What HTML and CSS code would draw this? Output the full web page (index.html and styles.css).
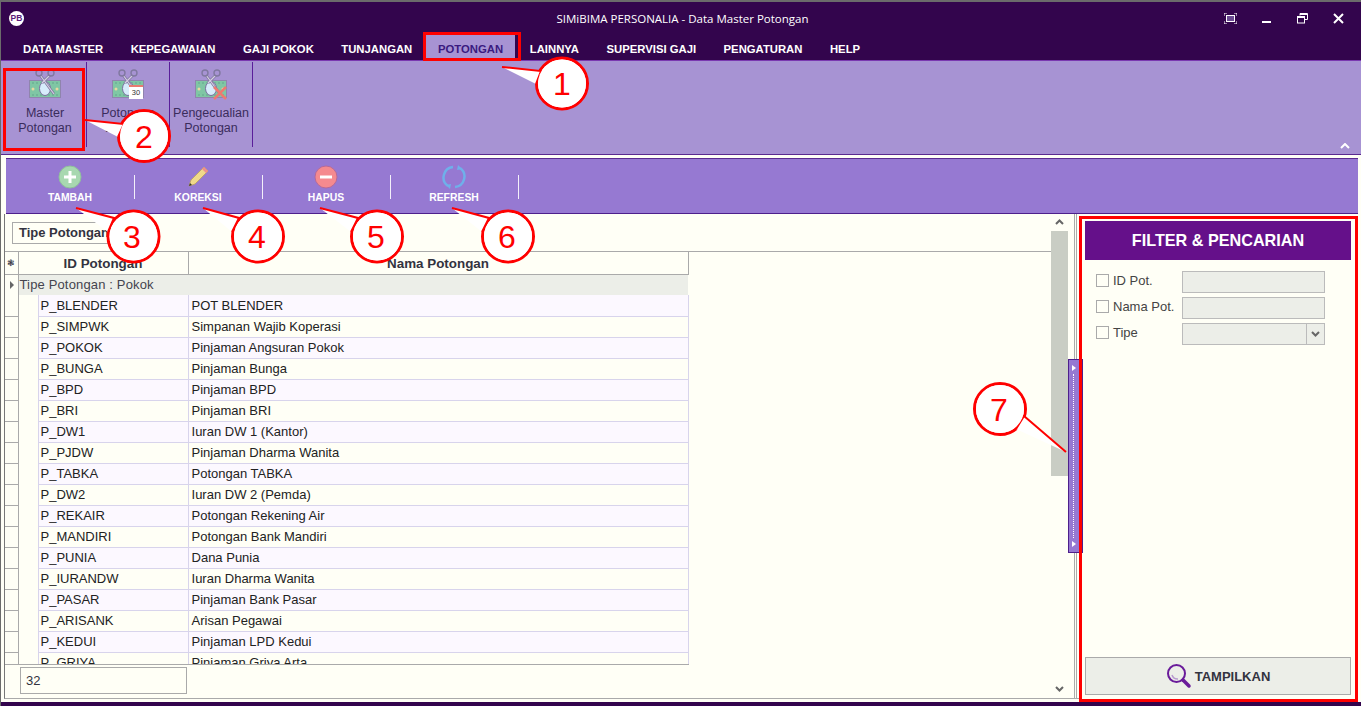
FILE: index.html
```html
<!DOCTYPE html>
<html lang="id">
<head>
<meta charset="utf-8">
<title>SIMiBIMA PERSONALIA - Data Master Potongan</title>
<link rel="stylesheet" href="styles.css">
</head>
<body>
<svg class="defs" width="0" height="0" aria-hidden="true">
  <symbol id="money" viewBox="0 0 32 32">
    <rect x=".5" y="11.500" width="31" height="17" fill="#7fc6a4" stroke="#8f84ad" stroke-width="1"/>
    <path d="M3 14h26M3 26h26" fill="none" stroke="#5d9f88" stroke-dasharray="2 2" stroke-width=".8"/>
    <ellipse cx="16" cy="19.500" rx="5.500" ry="7" fill="#d7ecfb" stroke="#7a6f9e" stroke-width="1"/>
    <circle cx="4" cy="20" r="1.500" fill="#e8d9a0"/>
    <circle cx="28" cy="20" r="1.500" fill="#e8d9a0"/>
    <path d="M11 6L25 25M21 6L13 14" stroke="#8078a0" stroke-width="2.600" fill="none"/>
    <path d="M11 6L25 25M21 6L13 14" stroke="#d5d0e2" stroke-width="1.200" fill="none"/>
    <circle cx="10" cy="4" r="3" fill="none" stroke="#8078a0" stroke-width="1.400"/>
    <circle cx="22" cy="4" r="3" fill="none" stroke="#8078a0" stroke-width="1.400"/>
  </symbol>
</svg>
<div class="window">
  <header class="titlebar">
    <span class="logo"><span>PB</span></span>
    <span class="title">SIMiBIMA PERSONALIA - Data Master Potongan</span>
    <div class="winbtns">
      <svg width="13" height="11" viewBox="0 0 13 11"><path d="M0 3V0h3M10 0h3v3M13 8v3h-3M3 11H0V8" fill="none" stroke="#fff"/><rect x="2.500" y="2.500" width="8" height="6" fill="#6a4a90" stroke="#fff"/></svg>
      <svg width="10" height="11" viewBox="0 0 10 11"><rect x="0" y="8" width="9" height="2" fill="#fff"/></svg>
      <svg width="11" height="11" viewBox="0 0 11 11"><path d="M3 2.500V.5h7.500v6H8" fill="none" stroke="#fff"/><rect x=".5" y="3.500" width="7" height="6.500" fill="none" stroke="#fff"/><path d="M3 1.500h7.500M1 4.500h6" stroke="#fff"/></svg>
      <svg width="11" height="11" viewBox="0 0 11 11"><path d="M1 1l9 9M10 1l-9 9" stroke="#fff" stroke-width="2"/></svg>
    </div>
  </header>
  <nav class="menubar">
    <a class="menu">DATA MASTER</a>
    <a class="menu">KEPEGAWAIAN</a>
    <a class="menu">GAJI POKOK</a>
    <a class="menu">TUNJANGAN</a>
    <a class="menu active">POTONGAN</a>
    <a class="menu">LAINNYA</a>
    <a class="menu">SUPERVISI GAJI</a>
    <a class="menu">PENGATURAN</a>
    <a class="menu">HELP</a>
  </nav>
  <section class="ribbon">
    <div class="rib-btn">
      <svg class="rib-ico" width="32" height="32"><use href="#money"/></svg>
      <span>Master<br>Potongan</span>
    </div>
    <div class="rib-btn">
      <span class="rib-ico-wrap">
        <svg class="rib-ico" width="32" height="32"><use href="#money"/></svg>
        <span class="cal">30</span>
      </span>
      <span>Potongan<br>Bulanan</span>
    </div>
    <div class="rib-btn">
      <span class="rib-ico-wrap">
        <svg class="rib-ico" width="32" height="32"><use href="#money"/></svg>
        <svg class="xmark" width="14" height="14" viewBox="0 0 14 14"><path d="M1 1l12 12M13 1L1 13" stroke="#ee7a70" stroke-width="2.500"/></svg>
      </span>
      <span>Pengecualian<br>Potongan</span>
    </div>
    <svg class="collapse" width="10" height="6" viewBox="0 0 10 6"><path d="M1 5l4-4 4 4" fill="none" stroke="#fff" stroke-width="2"/></svg>
  </section>
  <main class="content">
    <div class="toolbar">
      <div class="tool">
        <svg width="24" height="24" viewBox="0 0 24 24"><circle cx="12" cy="12" r="11" fill="#a8d8b0" stroke="#8fc09c"/><path d="M12 6v12M6 12h12" stroke="#fff" stroke-width="3"/></svg>
        <span>TAMBAH</span>
      </div>
      <i class="sep"></i>
      <div class="tool">
        <svg width="24" height="24" viewBox="0 0 24 24"><path d="M3 21l2-6L18 2l4 4L9 19z" fill="#f0d98a" stroke="#b9a15e" stroke-width=".8"/><path d="M18 2l4 4-2 2-4-4z" fill="#ee8f8f"/><path d="M3 21l1-3 2 2z" fill="#333"/></svg>
        <span>KOREKSI</span>
      </div>
      <i class="sep"></i>
      <div class="tool">
        <svg width="24" height="24" viewBox="0 0 24 24"><circle cx="12" cy="12" r="11" fill="#f58a8f" stroke="#b56a9a"/><path d="M6 12h12" stroke="#fff" stroke-width="3"/></svg>
        <span>HAPUS</span>
      </div>
      <i class="sep"></i>
      <div class="tool">
        <svg width="24" height="24" viewBox="0 0 24 24"><path d="M6 21A10.500 10.500 0 0 1 11 2" fill="none" stroke="#6fb0ea" stroke-width="2.500"/><path d="M18 3a10.500 10.500 0 0 1-5 19" fill="none" stroke="#6fb0ea" stroke-width="2.500"/><path d="M16 0l4 4-5 1zM8 24l-4-4 5-1z" fill="#6fb0ea"/></svg>
        <span>REFRESH</span>
      </div>
      <i class="sep"></i>
    </div>
    <div class="workspace">
      <div class="pane">
        <div class="groupbar"><span class="groupchip">Tipe Potongan</span></div>
        <div class="gridwrap">
          <table class="grid">
            <colgroup><col class="c-mark"><col class="c-ind"><col class="c-id"><col class="c-nama"></colgroup>
            <thead>
              <tr><th class="star">&#10051;</th><th class="hid" colspan="2">ID Potongan</th><th>Nama Potongan</th></tr>
            </thead>
            <tbody>
              <tr class="group"><td class="mark"><b class="tri"></b></td><td colspan="3">Tipe Potongan : Pokok</td></tr>
              <tr><td class="mark"></td><td class="ind"></td><td>P_BLENDER</td><td>POT BLENDER</td></tr>
              <tr><td class="mark"></td><td class="ind"></td><td>P_SIMPWK</td><td>Simpanan Wajib Koperasi</td></tr>
              <tr><td class="mark"></td><td class="ind"></td><td>P_POKOK</td><td>Pinjaman Angsuran Pokok</td></tr>
              <tr><td class="mark"></td><td class="ind"></td><td>P_BUNGA</td><td>Pinjaman Bunga</td></tr>
              <tr><td class="mark"></td><td class="ind"></td><td>P_BPD</td><td>Pinjaman BPD</td></tr>
              <tr><td class="mark"></td><td class="ind"></td><td>P_BRI</td><td>Pinjaman BRI</td></tr>
              <tr><td class="mark"></td><td class="ind"></td><td>P_DW1</td><td>Iuran DW 1 (Kantor)</td></tr>
              <tr><td class="mark"></td><td class="ind"></td><td>P_PJDW</td><td>Pinjaman Dharma Wanita</td></tr>
              <tr><td class="mark"></td><td class="ind"></td><td>P_TABKA</td><td>Potongan TABKA</td></tr>
              <tr><td class="mark"></td><td class="ind"></td><td>P_DW2</td><td>Iuran DW 2 (Pemda)</td></tr>
              <tr><td class="mark"></td><td class="ind"></td><td>P_REKAIR</td><td>Potongan Rekening Air</td></tr>
              <tr><td class="mark"></td><td class="ind"></td><td>P_MANDIRI</td><td>Potongan Bank Mandiri</td></tr>
              <tr><td class="mark"></td><td class="ind"></td><td>P_PUNIA</td><td>Dana Punia</td></tr>
              <tr><td class="mark"></td><td class="ind"></td><td>P_IURANDW</td><td>Iuran Dharma Wanita</td></tr>
              <tr><td class="mark"></td><td class="ind"></td><td>P_PASAR</td><td>Pinjaman Bank Pasar</td></tr>
              <tr><td class="mark"></td><td class="ind"></td><td>P_ARISANK</td><td>Arisan Pegawai</td></tr>
              <tr><td class="mark"></td><td class="ind"></td><td>P_KEDUI</td><td>Pinjaman LPD Kedui</td></tr>
              <tr><td class="mark"></td><td class="ind"></td><td>P_GRIYA</td><td>Pinjaman Griya Arta</td></tr>
            </tbody>
          </table>
        </div>
        <div class="gridfoot"><span class="count">32</span></div>
      </div>
      <div class="scroll">
        <svg width="9" height="6" viewBox="0 0 9 6"><path d="M1 5l3.500-3.500L8 5" fill="none" stroke="#666" stroke-width="2"/></svg>
        <div class="thumb"></div>
        <svg class="down" width="9" height="6" viewBox="0 0 9 6"><path d="M1 1l3.500 3.500L8 1" fill="none" stroke="#666" stroke-width="2"/></svg>
      </div>
      <div class="splitter"><div class="handle"><b></b><i></i><b></b></div></div>
      <aside class="filter">
        <h2 class="filter-head">FILTER &amp; PENCARIAN</h2>
        <div class="form">
          <label class="frow"><span class="chk"></span><span class="lbl">ID Pot.</span><span class="inp"></span></label>
          <label class="frow"><span class="chk"></span><span class="lbl">Nama Pot.</span><span class="inp"></span></label>
          <label class="frow"><span class="chk"></span><span class="lbl">Tipe</span><span class="inp select"><span class="drop"><svg width="9" height="6" viewBox="0 0 9 6"><path d="M1 1l3.500 3.500L8 1" fill="none" stroke="#666" stroke-width="2"/></svg></span></span></label>
        </div>
        <button class="show">
          <svg width="26" height="26" viewBox="0 0 26 26"><circle cx="10.500" cy="10.500" r="8.500" fill="none" stroke="#6a1b9a" stroke-width="2"/><path d="M6 12a6 6 0 0 0 6 4" fill="none" stroke="#b89ad0" stroke-width="1.500"/><path d="M17 17l6 6" stroke="#6a1b9a" stroke-width="3.500" stroke-linecap="round"/></svg>
          <span>TAMPILKAN</span>
        </button>
      </aside>
    </div>
  </main>
  <svg class="notes" width="1361" height="706" viewBox="0 0 1361 706">
    <g class="box"><rect x="424.500" y="33.500" width="95" height="26"/><rect x="4.500" y="69.500" width="79" height="80"/><rect x="1080.500" y="217.500" width="276" height="483"/></g>
    <g class="call">
      <g><circle cx="562" cy="83.500" r="25.500"/><path d="M502 67L541 71L536 84"/><circle class="in" cx="562" cy="83.500" r="24"/><text x="562" y="95">1</text></g>
      <g><circle cx="144" cy="136" r="25.500"/><path d="M85 120L124 124L118 137"/><circle class="in" cx="144" cy="136" r="24"/><text x="144" y="147.500">2</text></g>
      <g><circle cx="133.500" cy="236.500" r="25.500"/><path d="M76 208L114 218L108 232"/><circle class="in" cx="133.500" cy="236.500" r="24"/><text x="132" y="248">3</text></g>
      <g><circle cx="258" cy="236.500" r="25.500"/><path d="M203 208L239 218L232 232"/><circle class="in" cx="258" cy="236.500" r="24"/><text x="257" y="248">4</text></g>
      <g><circle cx="377" cy="236.500" r="25.500"/><path d="M320 208L358 218L351 232"/><circle class="in" cx="377" cy="236.500" r="24"/><text x="376" y="248">5</text></g>
      <g><circle cx="508" cy="236.500" r="25.500"/><path d="M452 208L489 218L482 232"/><circle class="in" cx="508" cy="236.500" r="24"/><text x="507" y="248">6</text></g>
      <g><circle cx="1000" cy="409" r="25.500"/><path d="M1066 452L1024 416L1016 429"/><circle class="in" cx="1000" cy="409" r="24"/><text x="999" y="420.500">7</text></g>
    </g>
  </svg>
</div>
</body>
</html>
```

FILE: styles.css
```css
* { box-sizing: border-box; }
html, body { margin: 0; padding: 0; }
body { font-family: "Liberation Sans", Arial, sans-serif; overflow: hidden; background: #33054d; }
.defs { position: absolute; }

.window {
  position: relative;
  width: 1361px;
  height: 706px;
  display: flex;
  flex-direction: column;
  background: #33054d;
  border-top: 2px solid #6b6b6b;
  border-left: 1px solid #6b6b6b;
  overflow: hidden;
}

.titlebar {
  height: 30px;
  flex: none;
  display: flex;
  align-items: center;
  color: #fff;
  padding: 2px 0 0 8px;
}
.logo {
  width: 15px; height: 15px; border-radius: 50%;
  background: #fff; color: #5a1a7a;
  display: flex; align-items: center; justify-content: center;
  font-size: 8.500px; font-weight: bold; flex: none;
}
.title {
  flex: 1;
  text-align: center;
  font-family: "Open Sans", "Liberation Sans", sans-serif;
  font-size: 11.500px;
  margin-left: 127px;
}
.winbtns { display: flex; align-items: center; gap: 25px; padding-right: 17px; margin-left: 10px; }

.menubar {
  height: 29px;
  flex: none;
  display: flex;
  align-items: flex-end;
  padding-left: 8.250px;
  border-bottom: 1px solid #7a38b0;
}
.menu {
  height: 25px;
  line-height: 29px;
  padding: 0 13.750px;
  font-size: 11.300px;
  font-weight: bold;
  color: #fff;
  white-space: nowrap;
}
.menu.active { background: #a793d3; color: #3a1a80; padding: 0 12px; margin: 0 1px 0 0; }

.ribbon {
  position: relative;
  height: 94px;
  flex: none;
  display: flex;
  background: #a793d3;
  padding: 1px 0 7px 3px;
  border-bottom: 1px solid #5a2a90;
}
.rib-btn {
  width: 83px;
  display: flex;
  flex-direction: column;
  align-items: center;
  border-right: 1px solid #5a1e9a;
  color: #3a2c5c;
  font-size: 12.500px;
  line-height: 15px;
  text-align: center;
  padding-top: 7px;
}
.rib-btn > span:last-child { margin-top: 5px; }
.rib-ico { display: block; }
.rib-ico-wrap { position: relative; display: block; width: 32px; height: 32px; }
.cal {
  position: absolute; left: 17px; top: 16px;
  width: 14px; height: 14px;
  background: #fff; border-top: 2px solid #e87a70;
  font-size: 7.500px; line-height: 12px; color: #333; text-align: center;
}
.xmark { position: absolute; left: 18px; top: 17px; }
.collapse { position: absolute; right: 11px; bottom: 5px; }

.content {
  flex: 1;
  min-height: 0;
  display: flex;
  flex-direction: column;
  background: #fffff6;
  padding: 3px 3px 3px 3px;
  border-bottom: 4px solid #33054d;
}
.toolbar {
  height: 56px;
  flex: none;
  display: flex;
  align-items: center;
  background: #9679d2;
  border-top: 1px solid #5a2a90;
  border-bottom: 1px solid #4d1f8c;
  margin-left: 2px;
  padding-left: 1px;
}
.tool {
  width: 126px;
  margin-right: 1px;
  height: 100%;
  display: flex;
  flex-direction: column;
  align-items: center;
  padding-top: 6px;
  color: #fff;
  font-size: 10.400px;
  font-weight: bold;
}
.tool span { margin-top: 3px; }
.sep { width: 1px; height: 24px; background: #f4f0fa; margin-top: 1px; }

.workspace {
  flex: 1;
  min-height: 0;
  display: flex;
  border-left: 1px solid #777;
  border-bottom: 1px solid #aaa;
}
.pane {
  width: 1046px;
  flex: none;
  display: flex;
  flex-direction: column;
  color: #33333f;
  font-size: 13px;
}
.groupbar { height: 37px; flex: none; padding: 8px 0 0 7px; }
.groupchip {
  display: block;
  width: 100px;
  height: 22px;
  line-height: 20px;
  border: 1px solid #aaa;
  padding-left: 6px;
  font-weight: bold;
  font-size: 13px;
  white-space: nowrap;
  overflow: hidden;
}
.gridwrap { height: 413px; flex: none; overflow: hidden; border-top: 1px solid #aaa; }
.grid { width: 683px; table-layout: fixed; border-collapse: collapse; }
.c-mark { width: 13px; } .c-ind { width: 20px; } .c-id { width: 150px; } .c-nama { width: 500px; }
.grid th {
  height: 22px; padding: 1px 0 0;
  font-size: 13.400px; font-weight: bold; color: #33333f;
  border-bottom: 1px solid #aaa; border-right: 1px solid #aaa;
  text-align: center;
}
.grid th.star { font-size: 9px; font-weight: normal; }
.grid td {
  height: 21px; padding: 0 0 0 2px;
  border-bottom: 1px solid #d8d4ec;
  border-right: 1px solid #d8d4ec;
  color: #222;
  white-space: nowrap;
  overflow: hidden;
  background: #fffff6;
}
.grid td:last-child { padding-left: 3px; }
.grid tbody tr:nth-child(even) td { background: #fcf8ff; }
.grid tbody tr td.mark { background: #fffff6; border-color: #aaa; border-left: 0; padding: 0; }
.grid tbody tr td.ind { background: #fffff6; border-bottom: 0; border-right-color: #d8d4ec; padding: 0; }
.grid tr.group td { background: #eceee8; color: #44444f; border: 0; letter-spacing: .15px; padding-left: 1px; }
.grid tr.group td.mark { background: #fffff6; border-right: 1px solid #aaa; }
.tri {
  display: block; width: 0; height: 0; margin-left: 5px;
  border-left: 4px solid #666; border-top: 4px solid transparent; border-bottom: 4px solid transparent;
}
.gridfoot {
  flex: 1; padding: 3px 0 0 15px;
  background: linear-gradient(#aaa, #aaa) no-repeat 0 0 / 684px 1px;
}
.count {
  display: block; width: 167px; height: 27px; line-height: 25px;
  border: 1px solid #aaa; padding-left: 5px; color: #33333f;
}

.scroll {
  width: 17px; flex: none;
  display: flex; flex-direction: column; align-items: center;
  padding-top: 5px;
}
.thumb { width: 17px; height: 245px; background: #c9cdc4; margin-top: 6px; }
.down { margin-top: auto; margin-bottom: 6px; }

.splitter {
  position: relative;
  z-index: 1;
  width: 11px; flex: none;
  background: linear-gradient(to right, #fffff6 6px, #aaa 6px, #aaa 7px, #fffff6 7px, #fffff6 8px, #aaa 8px, #aaa 9px, #fffff6 9px);
}
.handle {
  position: absolute; left: 0; top: 145px;
  width: 15px; height: 194px;
  background: #9679d2; border: 1px solid #4d1f8c;
  display: flex; flex-direction: column; align-items: center; justify-content: space-between;
  padding: 5px 4px 5px 0;
}
.handle b { width: 0; height: 0; border-left: 4px solid #fff; border-top: 3px solid transparent; border-bottom: 3px solid transparent; }
.handle i { flex: 1; margin: 3px 0; border-left: 1px dotted #fff; }

.filter {
  flex: 1;
  display: flex;
  flex-direction: column;
  padding: 5px 7px 6px 6px;
  margin: 2px 0 -3px;
  background: #fffff6;
  color: #444;
  font-size: 13px;
}
.filter-head {
  margin: 0; height: 39px; line-height: 39px;
  background: #65108a; color: #fff;
  text-align: center; font-size: 16.200px; font-weight: bold;
  flex: none;
}
.form { flex: 1; padding: 11px 0 0 11px; display: flex; flex-direction: column; gap: 4px; }
.frow { display: flex; height: 22px; }
.chk { width: 13px; height: 13px; border: 1px solid #aaa; margin: 3px 4px 0 0; flex: none; }
.lbl { width: 69px; flex: none; line-height: 19px; }
.inp { width: 143px; height: 22px; background: #eceee8; border: 1px solid #bbb; display: flex; justify-content: flex-end; }
.drop { width: 18px; border-left: 1px solid #bbb; display: flex; align-items: center; justify-content: center; }
.show {
  flex: none; height: 38px; padding: 0;
  background: #eceee8; border: 1px solid #aaa;
  display: flex; align-items: center; justify-content: center; gap: 3px;
  font-family: inherit; font-size: 13px; font-weight: bold; color: #33333f;
}

.notes { position: absolute; left: -1px; top: -2px; z-index: 2; pointer-events: none; }
.box rect { fill: none; stroke: #f00; stroke-width: 3; }
.call circle { fill: #fff; stroke: #f00; stroke-width: 3; }
.call path { fill: #fff; stroke: #f00; stroke-width: 2; stroke-linejoin: miter; }
.call circle.in { stroke: none; }
.call text { fill: #f00; font-family: "Liberation Sans", Arial, sans-serif; font-size: 32px; text-anchor: middle; }
```
